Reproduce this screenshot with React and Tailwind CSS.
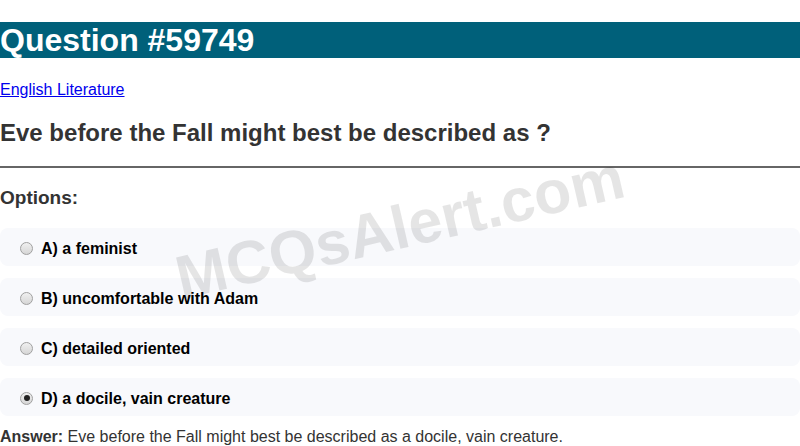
import React from "react";

const options = [
  { label: "A) a feminist", checked: false },
  { label: "B) uncomfortable with Adam", checked: false },
  { label: "C) detailed oriented", checked: false },
  { label: "D) a docile, vain creature", checked: true },
];

const Radio = ({ checked }) => (
  <span className="relative flex h-[13px] w-[13px] shrink-0 items-center justify-center rounded-full border border-[#a0a0a0] bg-gradient-to-b from-[#f0f0f0] to-[#d6d6d6]">
    {checked && <span className="h-[6px] w-[6px] rounded-full bg-[#222]" />}
  </span>
);

export default function App() {
  return (
    <div className="relative w-[800px] h-[446px] overflow-hidden bg-white font-['Liberation_Sans',Arial,sans-serif] text-[#333]">
      <h1 className="mt-[22px] h-[36px] bg-[#00607a] text-[32px] font-bold leading-[36px] text-white">
        Question #59749
      </h1>

      <a href="#" className="mt-[23px] block text-[16px] leading-[18px] text-[#0000ee] underline">
        English Literature
      </a>

      <h2 className="mt-[20px] text-[24px] font-bold leading-[28px] text-[#333]">
        Eve before the Fall might best be described as ?
      </h2>

      <hr className="mt-[19px] border-t-2 border-[#666]" />

      <h3 className="mt-[19px] text-[19px] font-bold leading-[22px] text-[#333]">Options:</h3>

      <div className="mt-[19px] flex flex-col gap-[12px]">
        {options.map((o) => (
          <div key={o.label} className="flex h-[38px] items-center gap-[8px] rounded-[8px] bg-[#f8f9fc] pl-[20px] pt-[2px]">
            <Radio checked={o.checked} />
            <span className="pt-[2px] text-[16px] font-bold text-black">{o.label}</span>
          </div>
        ))}
      </div>

      <p className="mt-[12px] text-[16px] leading-[18px] text-[#333]">
        <span className="font-bold">Answer:</span> Eve before the Fall might best be described as a docile, vain creature.
      </p>

      <div className="pointer-events-none absolute left-[400px] top-[228px] -translate-x-1/2 -translate-y-1/2 -rotate-[13deg] whitespace-nowrap text-[61px] font-bold text-black/10">
        MCQsAlert.com
      </div>
    </div>
  );
}
